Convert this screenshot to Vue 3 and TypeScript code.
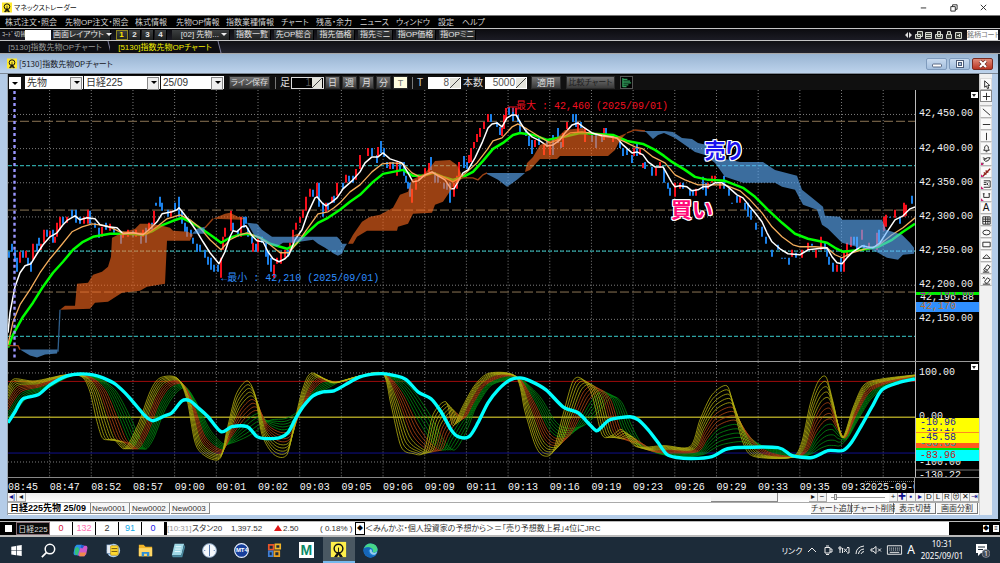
<script setup lang="ts">
type Knot = [number, number, number, number]
type Tone = 'red' | 'pink' | 'ink' | 'sky' | 'blue'

const menus = ['株式注文・照会', '先物OP注文・照会', '株式情報', '先物OP情報', '指数業種情報', 'チャート', '残高・余力', 'ニュース', 'ウィンドウ', '設定', 'ヘルプ']
const shortcuts = ['指数一覧', '先OP総合', '指先価格', '指先ミニ', '指OP価格', '指OPミニ']
const periods = ['日', '週', '月', '分']
const times = ['08:45', '08:47', '08:52', '08:57', '09:00', '09:01', '09:02', '09:03', '09:05', '09:06', '09:09', '09:11', '09:13', '09:16', '09:19', '09:23', '09:26', '09:29', '09:33', '09:35', '09:37']
const sheets = ['New0001', 'New0002', 'New0003']
const chartActions = ['チャート追加', 'チャート削除', '表示切替', '画面分割']
const quotes: { v: string; tone: Tone }[] = [
  { v: '0', tone: 'red' }, { v: '132', tone: 'pink' }, { v: '2', tone: 'ink' }, { v: '91', tone: 'sky' }, { v: '0', tone: 'blue' }
]
const zoomKeys = ['+', '✚', '▪', '▸', 'D', 'L', 'R', '⊕', '✕', '⇥']

const gridX = Array.from({ length: 21 }, (_, i) => 49.6 + i * 41.68)
const prices = [42450, 42400, 42350, 42300, 42250, 42200, 42150]
const priceY = (p: number) => 114.5 + (42450 - p) * 0.684
const priceTop = (p: number) => ({ top: ((priceY(p) - 90) / 271) * 100 + '%' })
const oscTop = (y: number) => ({ top: ((y - 362) / 116) * 100 + '%' })
const fmt = (p: number) => p.toLocaleString('en-US') + '.00'

const bandBrown = [42440, 42310, 42190]
const bandTeal = [42375, 42250, 42125]

const fastMa = '8,333 10,313 15,287 20,273 25,266 31,264 37,254 43,245 50,237 57,233 63,225 68,220 75,216 80,220 87,218 95,219 100,225 108,227 117,228 123,234 133,233 143,235 150,229 157,222 162,214 172,212 177,210 179,208 183,213 190,222 197,232 203,242 210,253 219,264 225,252 230,237 233,231 237,232 242,227 246,226 252,236 257,241 263,242 268,252 273,259 279,262 285,259 289,255 295,240 302,230 308,213 315,198 317,197 322,203 326,206 332,202 337,198 343,189 353,180 360,172 365,163 372,157 378,157 383,153 390,159 402,163 408,173 413,182 418,181 425,175 432,172 438,176 445,180 451,189 454,189 460,178 463,173 468,170 475,158 482,143 488,128 492,124 497,123 502,127 507,118 512,115 516,115 520,122 525,130 532,137 540,141 547,146 553,145 560,140 565,133 572,125 578,123 583,127 592,133 602,136 610,137 617,138 623,145 632,153 637,152 643,155 648,162 655,167 663,167 672,183 675,187 680,186 687,187 692,191 698,190 703,187 708,187 715,183 722,183 728,187 737,195 743,198 750,207 755,213 762,222 767,233 772,242 780,249 788,254 800,255 808,250 817,249 827,248 832,257 837,263 842,264 847,258 853,252 862,246 867,247 873,248 880,243 887,232 895,220 903,216 910,209 915,207'
const midMa = '8,345 13,322 20,305 30,290 40,273 50,259 60,247 72,232 82,227 92,224 107,226 120,232 133,233 147,234 157,227 167,219 180,215 190,220 200,228 210,240 221,250 230,240 240,235 247,233 260,238 270,245 280,253 289,253 298,242 308,228 318,214 328,212 334,208 340,203 350,192 360,185 372,172 382,164 392,163 403,164 412,173 420,177 433,173 443,177 453,182 460,178 467,172 477,163 487,150 493,141 502,138 512,127 518,124 527,129 540,137 550,143 560,139 570,133 582,132 597,134 613,137 625,142 635,147 643,149 653,157 665,163 675,175 685,180 698,185 715,185 725,185 740,191 750,200 762,213 772,227 782,237 793,245 800,247 815,247 827,248 835,255 842,258 852,253 865,249 878,246 892,235 903,228 915,218'
const slowMa = '8,348 13,335 23,317 33,303 43,287 53,273 63,262 73,250 83,242 93,237 110,234 127,234 143,235 153,231 163,225 173,221 182,218 192,223 203,230 213,237 221,243 230,238 240,235 248,234 260,238 270,244 287,249 295,245 307,233 318,223 328,218 340,210 350,202 360,195 373,182 383,174 393,172 403,170 413,176 423,176 433,173 443,177 453,180 463,177 473,172 483,161 493,149 503,143 513,135 520,133 533,135 547,140 563,137 580,133 597,134 613,135 627,141 643,144 655,150 664,156 672,162 685,170 695,177 708,180 725,181 743,188 755,197 768,210 782,223 795,234 808,239 827,243 835,248 843,252 862,250 878,247 892,240 903,232 915,224'

const bullClouds = [
  '60,310 65,306 75,306 77,284 88,283 93,275 102,272 108,267 111,257 112,238 122,233 135,229 140,224 150,224 162,226 170,228 173,231 188,232 193,235 190,241 167,241 165,284 147,287 140,291 122,293 108,302 95,303 90,309 61,310',
  '213,219 225,214 230,213 238,217 246,219 240,220',
  '291,237 297,234 303,236',
  '348,244 353,235 362,222 370,217 380,215 393,208 400,195 408,192 412,180 425,173 432,165 435,161 450,160 457,165 461,173 463,178 453,187 443,202 435,205 432,213 413,214 408,224 398,227 397,231 367,231 357,237 353,244',
  '525,172 527,163 533,157 540,145 557,138 565,130 583,128 588,135 617,137 627,133 620,140 615,150 608,156 560,156 557,159 540,159 530,170'
]
const bearClouds = [
  '20,350 58,350 57,354 45,355 37,358 30,356',
  '192,234 197,229 205,227 204,234',
  '247,223 257,224 262,230 272,237 290,237 337,237 340,240 342,244 347,244 345,247 342,254 338,256 334,254 325,248 318,244 313,240 293,243 283,243 277,247 267,244 255,237 250,228',
  '485,173 525,173 517,180 507,187 498,180',
  '635,131 665,131 673,132 682,138 692,139 698,143 707,145 725,159 740,162 763,162 775,170 797,176 802,190 812,198 823,207 825,216 840,217 842,220 882,220 886,230 902,235 910,243 914,248 914,254 903,255 898,260 887,258 878,253 872,250 860,248 842,243 828,229 822,225 817,210 803,205 795,190 782,187 775,183 743,183 725,177 715,163 705,155 695,152 685,145 675,138 664,133 658,135 653,139 646,132'
]

const upBars = 'M20 252V263M26 251V258M33 244V260M41 244V250M44 230V243M50 231V237M55 237V243M57 223V237M60 217V230M67 217V223M84 217V224M88 210V224M102 227V237M110 224V231M123 233V238M128 230V237M136 230V237M143 230V237M149 223V232M154 211V224M171 211V217M221 258V278M223 237V250M225 228V237M231 211V231M241 217V237M253 243V252M258 237V252M274 265V278M277 258V264M281 252V264M285 250V258M290 243V252M293 230V244M296 223V230M300 217V223M303 210V218M306 197V211M310 189V197M317 183V197M326 203V212M332 197V203M337 183V196M346 175V183M356 169V180M360 155V169M368 148V156M378 147V156M390 162V169M397 162V176M412 189V203M416 180V190M419 175V181M425 168V177M429 163V172M454 183V197M457 176V189M459 162V177M469 155V163M471 148V162M474 142V148M477 134V142M480 128V137M484 122V129M488 114V122M502 128V136M504 115V129M506 108V120M516 108V115M535 140V147M544 145V155M550 145V155M563 133V147M567 122V129M578 122V133M585 128V142M604 128V140M613 135V142M634 148V156M640 149V155M643 163V168M656 168V176M660 162V168M675 183V197M680 183V189M696 189V196M708 183V189M712 176V183M715 176V182M720 182V189M740 197V203M792 250V257M802 250V258M808 243V250M816 250V258M821 237V250M837 265V272M844 253V272M847 243V257M851 237V247M862 230V240M869 243V250M877 233V250M884 217V231M886 215V227M895 210V218M904 203V217M906 205V216'
const downBars = 'M9 252V258M12 244V252M15 250V262M17 258V272M23 251V258M28 258V265M31 262V272M37 244V252M39 238V246M47 230V237M53 230V243M63 217V224M72 210V217M76 210V223M80 217V224M90 211V224M95 223V228M99 228V238M106 223V230M114 228V233M121 232V244M133 231V237M141 233V244M146 228V243M152 223V230M156 203V206M160 197V207M162 203V211M168 210V217M175 203V211M179 197V217M182 211V224M185 223V232M187 227V237M191 230V237M193 238V244M197 244V252M200 245V252M205 250V258M208 257V265M211 258V270M214 265V272M218 265V272M233 223V231M238 230V237M244 217V228M246 217V224M248 228V237M252 237V244M256 244V252M262 237V243M266 243V257M268 252V265M271 258V272M288 250V257M313 190V197M319 183V207M323 203V217M328 203V210M334 196V203M343 183V189M349 176V182M353 176V183M372 148V156M377 155V163M381 141V153M384 148V157M387 162V168M393 162V169M400 162V170M404 162V176M406 176V183M408 182V189M410 183V197M431 157V170M435 172V183M438 176V183M444 183V189M447 183V190M450 183V203M464 156V168M467 162V169M491 114V122M497 122V127M500 127V135M509 107V115M513 108V121M518 115V122M520 121V134M526 128V136M529 136V146M532 140V154M539 138V145M547 140V147M553 135V155M558 128V143M561 142V148M573 114V122M576 114V127M581 122V128M592 133V142M596 135V148M602 135V142M606 128V135M620 142V148M623 148V156M627 149V155M632 155V163M637 142V156M645 162V169M652 167V176M664 168V183M668 183V189M670 188V196M683 183V189M690 189V196M693 190V196M703 177V190M706 183V196M724 176V189M729 189V196M732 203V204M737 196V203M745 203V210M748 203V217M751 210V220M756 223V230M762 227V237M766 237V244M772 250V257M778 245V250M782 258V259M785 258V259M789 258V265M796 253V258M812 244V246M825 243V250M827 248V257M829 257V265M833 263V272M841 258V272M854 237V245M857 237V250M864 245V250M879 230V243M890 217V218M900 217V224M912 196V204'

const family: Knot[] = [
  [8, 388, 8, 424], [14, 379, 25, 400], [35, 381, 45, 390], [65, 375, 72, 376], [82, 377, 97, 378], [90, 392, 115, 390],
  [97, 422, 130, 417], [103, 439, 140, 440], [114, 440, 143, 448], [125, 449, 147, 449], [138, 425, 154, 438], [150, 392, 165, 410],
  [160, 378, 176, 393], [177, 378, 186, 388], [187, 400, 196, 402], [197, 448, 210, 430], [219, 460, 223, 444], [227, 430, 233, 443],
  [236, 395, 247, 437], [247, 381, 258, 430], [255, 395, 264, 424], [262, 435, 272, 420], [274, 455, 285, 419], [287, 455, 295, 414],
  [295, 420, 305, 404], [303, 388, 318, 393], [312, 373, 330, 387], [333, 383, 342, 381], [360, 376, 362, 376], [383, 374, 386, 374],
  [391, 405, 408, 385], [401, 447, 428, 412], [413, 454, 442, 438], [424, 452, 452, 450], [433, 415, 458, 447], [446, 402, 468, 428],
  [453, 426, 474, 412], [462, 408, 480, 401], [475, 385, 492, 385], [490, 373, 512, 379], [516, 377, 522, 380], [525, 412, 540, 397],
  [535, 445, 554, 420], [543, 456, 564, 428], [553, 452, 578, 428], [563, 415, 588, 423], [573, 381, 600, 410], [582, 379, 612, 397],
  [592, 395, 622, 403], [602, 435, 632, 427], [612, 436, 643, 446], [622, 430, 655, 453], [636, 447, 668, 456], [664, 446, 680, 458],
  [690, 447, 703, 455], [700, 420, 712, 450], [712, 395, 722, 445], [727, 386, 740, 442], [734, 410, 752, 445], [743, 443, 768, 448],
  [754, 457, 784, 452], [790, 458, 802, 457], [801, 445, 812, 454], [810, 405, 820, 449], [818, 382, 828, 446], [826, 377, 835, 446],
  [833, 402, 840, 446], [842, 438, 848, 438], [853, 408, 858, 420], [864, 385, 872, 398], [882, 379, 888, 387], [915, 375, 915, 377]
]
const signal: [number, number][] = [
  [8, 423], [15, 412], [23, 399], [38, 395], [50, 385], [67, 376], [80, 374], [93, 375], [103, 378], [115, 384], [125, 393], [133, 402],
  [145, 416], [153, 421], [165, 416], [172, 413], [182, 401], [190, 401], [197, 407], [208, 417], [221, 432], [232, 427], [247, 427],
  [257, 437], [265, 439], [280, 438], [288, 433], [295, 420], [303, 407], [313, 396], [323, 392], [334, 391], [345, 385], [360, 377],
  [375, 374], [386, 374], [405, 379], [418, 392], [431, 399], [441, 412], [451, 430], [458, 437], [469, 437], [478, 423], [488, 403],
  [498, 390], [510, 380], [520, 378], [530, 381], [546, 390], [563, 407], [578, 413], [588, 423], [596, 431], [601, 428], [610, 420],
  [630, 417], [638, 420], [648, 430], [658, 443], [667, 455], [677, 458], [692, 459], [712, 457], [725, 450], [738, 448], [778, 448],
  [792, 456], [812, 458], [828, 451], [843, 451], [852, 442], [862, 425], [872, 407], [882, 390], [898, 383], [915, 379]
]

function smooth(p: [number, number][]): string {
  let d = `M${p[0][0]} ${p[0][1]}`
  for (let i = 0; i < p.length - 1; i++) {
    const a = p[Math.max(0, i - 1)]
    const b = p[i]
    const c = p[i + 1]
    const e = p[Math.min(p.length - 1, i + 2)]
    const n = (v: number) => v.toFixed(1)
    d += `C${n(b[0] + (c[0] - a[0]) / 7)} ${n(b[1] + (c[1] - a[1]) / 7)} ${n(c[0] - (e[0] - b[0]) / 7)} ${n(c[1] - (e[1] - b[1]) / 7)} ${n(c[0])} ${n(c[1])}`
  }
  return d
}

const ribbons = Array.from({ length: 14 }, (_, i) => {
  const k = i / 13
  const pts = family.map(([xf, yf, xs, ys]): [number, number] => [xf + (xs - xf) * k, yf + (ys - yf) * k])
  return { d: smooth(pts), tone: i < 5 ? 'yellow' : i < 9 ? 'orange' : 'green' }
}).reverse()
const signalPath = smooth(signal)

const tools: { name: string; d: string }[] = [
  { name: '斜線', d: 'M2 2L10 9' },
  { name: '水平線', d: 'M2 6H10' },
  { name: '垂直線', d: 'M6 2V10' },
  { name: 'アラート', d: 'M3 8H9L8 6V4Q6 1 4 4V6ZM5 9.5H7' },
  { name: '波形', d: 'M2 3L5 4L7 3L10 3L8 6L5 7L3 5L6 4M1 9L3 9' },
  { name: 'トレンド', d: 'M2 10L10 2M3 6L6 8M5 4L8 6' },
  { name: '価格帯', d: 'M3 2H10V9H3M3 4H6M3 6H6M8 4Q5 5 8 7' },
  { name: '期間', d: 'M3 3V7H9V3M2 3H4M8 3H10' },
  { name: '文字', d: '' },
  { name: '表', d: 'M2 2H10V10H2ZM2 4.5H10M2 7H10M5 2V10M7.5 2V10' },
  { name: '楕円', d: 'M2 6A4 2.6 0 1 0 10 6A4 2.6 0 1 0 2 6' },
  { name: '四角', d: 'M2 3.5H10V8.5H2Z' },
  { name: '三角', d: 'M6 4L10 8H2Z' },
  { name: '消去', d: 'M3 7L7 2L10 4L6 9H4ZM2 10H9M4 6L7 8' },
  { name: '全消去', d: 'M4 7L7 3L10 5L7 9H5ZM2 10H10M2 2L4 4M4 2L2 4' }
]
</script>

<template>
  <div class="app">
    <header class="titlebar">
      <svg class="logo" viewBox="0 0 12 12"><rect width="12" height="12" fill="#ffe92e" /><circle cx="6" cy="5" r="3.4" fill="none" stroke="#111" stroke-width="1.2" /><path d="M6 4V7L3 11H5L6 9L7 11H9L6 7" fill="#111" stroke="#111" stroke-width=".8" /></svg>
      <h1>マネックストレーダー</h1>
      <div class="winctl">
        <button aria-label="最小化"><svg viewBox="0 0 10 10"><path d="M2 5.5H8" /></svg></button>
        <button aria-label="元に戻す"><svg viewBox="0 0 10 10"><path d="M2 4H7V9H2ZM4 4V2H9V7H7" /></svg></button>
        <button aria-label="閉じる"><svg viewBox="0 0 10 10"><path d="M2 2L8 8M8 2L2 8" /></svg></button>
      </div>
    </header>

    <nav class="menubar">
      <a v-for="m in menus" :key="m" href="#">{{ m }}</a>
    </nav>

    <div class="mainbar">
      <label class="code" for="code">ｺｰﾄﾞ切替</label>
      <input id="code" type="text" class="codebox">
      <button class="dark lay">画面レイアウト<i class="tri"></i></button>
      <div class="nums">
        <button v-for="n in 4" :key="n" class="dark" :class="{ on: n === 1 }">{{ n }}</button>
      </div>
      <button class="dark lay">[02] 先物...<i class="tri"></i></button>
      <div class="shorts">
        <button v-for="s in shortcuts" :key="s" class="dark">{{ s }}</button>
      </div>
      <svg class="minis" viewBox="0 0 58 10">
        <path d="M3 2L0 5L3 8ZM4 2L7 5L4 8Z" fill="#ddd" />
        <g fill="#3c403a" stroke="#d4d8d0"><path d="M12.500 1.500H17.500V6.500H12.500ZM10.500 4.500H15.500V8.500H10.500ZM20.500 2.500H26.500V8.500H20.500ZM20 4.500H27M21 6.500H26M30.500 4.500H37.500V8.500H30.500ZM32.500 1.500H35.500V6.500H32.500ZM42.500 4V1.500H45.500V4M41.500 4.500H46.500V8.500H41.500ZM50.500 2.500H56.500V8.500H50.500ZM52 5.500H55M54.500 4V7" /></g>
      </svg>
      <input type="text" class="find" placeholder="銘柄コード" aria-label="銘柄コード">
    </div>

    <div class="doctabs">
      <button>[5130]指数先物OPチャート</button>
      <button class="on">[5130]指数先物OPチャート</button>
    </div>

    <main class="mdi">
      <header class="childbar">
        <svg class="logo" viewBox="0 0 12 12"><rect width="12" height="12" fill="#ffe92e" /><circle cx="6" cy="5" r="3.4" fill="none" stroke="#111" stroke-width="1.2" /><path d="M6 4V7L3 11H5L6 9L7 11H9L6 7" fill="#111" stroke="#111" stroke-width=".8" /></svg>
        <h2>[5130]指数先物OPチャート</h2>
        <div class="childctl">
          <button aria-label="最小化"><svg viewBox="0 0 14 10"><rect x="2.500" y="5" width="9" height="3" rx="1" fill="#fff" stroke="#5b6b86" /></svg></button>
          <button aria-label="最大化"><svg viewBox="0 0 14 10"><rect x="3.500" y="1.500" width="7" height="7" fill="#fff" stroke="#4c5c78" /><rect x="5.500" y="3.500" width="3" height="3" fill="#a9c4e4" stroke="#4c5c78" /></svg></button>
          <button aria-label="閉じる" class="close"><svg viewBox="0 0 14 10"><path d="M4 2L10 8M10 2L4 8" stroke="#6d2a24" stroke-width="3.600" /><path d="M4 2L10 8M10 2L4 8" stroke="#fff" stroke-width="2.200" /></svg></button>
        </div>
      </header>

      <div class="body">
        <section class="work">
          <div class="chartbar">
            <button class="drop" aria-label="一覧"></button>
            <div class="sel"><select aria-label="種別"><option>先物</option></select></div>
            <div class="sel"><select aria-label="銘柄"><option>日経225</option></select></div>
            <div class="sel"><select aria-label="限月"><option>25/09</option></select></div>
            <button class="grey save">ライン保存</button>
            <label for="foot" class="foot">足</label>
            <div class="spin off"><input id="foot" type="text" value="1"><i></i></div>
            <div class="periods">
              <button v-for="p in periods" :key="p" class="grey">{{ p }}</button>
              <button class="grey tick">T</button>
            </div>
            <label for="ticks" class="foot mid">T</label>
            <div class="spin"><input id="ticks" type="text" value="8"><i></i></div>
            <label for="bars" class="bars">本数</label>
            <div class="spin"><input id="bars" type="text" value="5000"><i></i></div>
            <button class="grey apply">適用</button>
            <button class="grey dim" disabled>比較チャート</button>
            <button class="vol" aria-label="価格帯別出来高"><svg viewBox="0 0 12 12"><path d="M2 1V11M2 2.500H7M2 4.500H10M2 6.500H11M2 8.500H8M2 10.500H6" stroke="#2f9c5a" stroke-width="1.300" fill="none" /></svg></button>
          </div>

          <div class="pane price">
            <div class="plot">
              <svg viewBox="8 90 907 271" preserveAspectRatio="none">
                <g class="grid">
                  <line v-for="x in gridX" :key="x" :x1="x" :x2="x" y1="90" y2="361" />
                  <line v-for="p in prices" :key="p" x1="8" x2="915" :y1="priceY(p)" :y2="priceY(p)" />
                </g>
                <line v-for="p in bandBrown" :key="p" class="brown" x1="8" x2="915" :y1="priceY(p)" :y2="priceY(p)" />
                <line v-for="p in bandTeal" :key="p" class="teal" x1="8" x2="915" :y1="priceY(p)" :y2="priceY(p)" />
                <path :d="downBars" class="down" />
                <path :d="upBars" class="up" />
                <polyline :points="slowMa" class="slow" />
                <polyline :points="midMa" class="midma" />
                <polyline :points="fastMa" class="fast" />
                <polygon v-for="c in bullClouds" :key="c" :points="c" class="bull" />
                <polygon v-for="c in bearClouds" :key="c" :points="c" class="bear" />
                <path d="M8 346H18L20 350M205 228L213 219M461 178L473 178L478 180L483 175L487 173M627 133L635 130L645 131" class="bullline" />
                <path d="M58 352L60 310" class="bearline" />
                <path d="M505 111L508 107H517M513 107V112" stroke="#f01020" fill="none" />
                <line x1="14.500" x2="14.500" y1="91" y2="361" class="session" />
              </svg>
              <span class="note max">最大 : 42,460 (2025/09/01)</span>
              <span class="note min">←最小 : 42,210 (2025/09/01)</span>
              <strong class="mark sell">売り</strong>
              <strong class="mark buy">買い</strong>
            </div>
            <div class="axis">
              <i class="fold"></i>
              <span v-for="p in prices" :key="p" :style="priceTop(p)">{{ fmt(p) }}</span>
              <div class="tags pricetags">
                <b class="t-green">42,195.00</b>
                <b class="t-black">42,196.88</b>
                <b class="t-blue">42,170</b>
              </div>
            </div>
          </div>

          <div class="pane osc">
            <div class="plot">
              <svg viewBox="8 362 907 116" preserveAspectRatio="none">
                <g class="grid">
                  <line v-for="x in gridX" :key="x" :x1="x" :x2="x" y1="362" y2="477" />
                  <line x1="8" x2="915" y1="373" y2="373" />
                  <line x1="8" x2="915" y1="462.500" y2="462.500" />
                </g>
                <path d="M8 381.500H915" stroke="#a00c0c" />
                <path d="M8 417.500H915" stroke="#a39a22" stroke-width="1.500" />
                <path d="M8 453.500H915" stroke="#10108c" />
                <path v-for="r in ribbons" :key="r.d" :d="r.d" :class="['rib', r.tone]" />
                <path :d="signalPath" class="signal" />
              </svg>
            </div>
            <div class="axis">
              <i class="fold"></i>
              <span :style="oscTop(373)">100.00</span>
              <span :style="oscTop(418)">0.00</span>
              <span :style="oscTop(464)">-100.00</span>
              <span class="low" :style="oscTop(476)">-130.22</span>
              <div class="tags osctags">
                <b class="o-y1">-10.96</b>
                <b class="o-y0">-18.17</b>
                <b class="o-y2">-45.58</b>
                <b class="o-o">-56.65</b>
                <b class="o-c">-83.96</b>
              </div>
            </div>
          </div>

          <div class="timeaxis">
            <div class="times">
              <span v-for="t in times" :key="t">{{ t }}</span>
              <em>2025-09-01</em>
            </div>
          </div>

          <div class="scrollrow">
            <button class="k navy">◂|</button>
            <button class="k">◂</button>
            <div class="track"><i></i></div>
            <button class="k">▸</button>
            <button class="k">−</button>
            <input type="range" aria-label="表示倍率" min="0" max="100" value="6">
            <button v-for="(z, i) in zoomKeys" :key="z" class="k" :class="{ navy: (i > 0 && i < 4) || i === 9 }">{{ z }}</button>
          </div>

          <div class="sheetrow">
            <button class="on">日経225先物 25/09</button>
            <button v-for="s in sheets" :key="s" class="sheet">{{ s }}</button>
            <div class="acts"><button v-for="a in chartActions" :key="a">{{ a }}</button></div>
          </div>
        </section>

        <aside class="tools">
          <button aria-label="選択"><svg viewBox="0 0 12 12"><path d="M4 2V9L6 7.500L7 10.500L8.500 10L7.500 7H9.500Z" /></svg></button>
          <button aria-label="十字" class="on"><svg viewBox="0 0 12 12"><path d="M6 2V10M2 6H10" /></svg></button>
          <div class="gap"></div>
          <button v-for="(t, i) in tools" :key="t.name" :aria-label="t.name">
            <span v-if="!t.d">A</span>
            <svg v-else viewBox="0 0 12 12"><path :d="t.d" :class="{ red: i === 5 }" /><path v-if="i > 3 && i < 8" d="M0 8V11H3Z" class="corner" /></svg>
          </button>
        </aside>
      </div>
    </main>

    <footer class="ticker">
      <i class="sq"></i>
      <button class="idx">日経225</button>
      <span v-for="(q, i) in quotes" :key="i" class="q" :class="q.tone">{{ q.v }}</span>
      <div class="strip">
        <span class="at">[10:31]</span><span class="nm">スタン20</span><span class="px">1,397.52</span><span class="chg"><i></i>2.50</span><span class="pc">( 0.18% )</span>
        <button class="box" aria-label="ニュース切替">◆</button>
        <a href="#" class="news">＜みんかぶ・個人投資家の予想から＞＝「売り予想数上昇」4位にJRC</a>
      </div>
      <div class="ends"><button aria-label="設定">◆</button><button aria-label="表示">≡</button></div>
    </footer>

    <footer class="taskbar">
      <div class="apps">
        <button aria-label="スタート"><svg viewBox="0 0 20 20"><path d="M4.500 6L9.500 5.200V9.700H4.500ZM10.200 5.100L15.500 4.300V9.700H10.200ZM4.500 10.300H9.500V14.900L4.500 14.100ZM10.200 10.300H15.500V15.800L10.200 15Z" fill="#fff" /></svg></button>
        <button aria-label="検索"><svg viewBox="0 0 20 20"><circle cx="11.500" cy="8.500" r="5" fill="none" stroke="#fff" stroke-width="1.600" /><path d="M8 12L3 17" stroke="#fff" stroke-width="1.800" /></svg></button>
        <button aria-label="Copilot"><svg viewBox="0 0 20 20"><path d="M6 4H11Q13 4 12 7L10 13Q9 16 6 15H4Q2 14 3 11L4 6Z" fill="#2a8fe8" /><path d="M4 8L7 6L9 9L7 15L4 14Z" fill="#35c07a" /><path d="M14 16H9Q7 16 8 13L10 7Q11 4 14 5H16Q18 6 17 9L16 14Z" fill="#d05ac8" /><path d="M9 12H16L14 16H9Z" fill="#f08a4a" /><path d="M11 4L14 5L12 8L10 7Z" fill="#1f5fd0" /></svg></button>
        <button aria-label="メール"><svg viewBox="0 0 20 20"><circle cx="11" cy="10" r="7" fill="#a9cdf0" /><rect x="4" y="4" width="6" height="9" fill="#e8eef5" stroke="#5577a0" stroke-width=".6" /><rect x="8" y="5" width="8" height="10" rx="1" fill="#ffd92e" stroke="#b98a10" stroke-width=".7" /><path d="M9 8H15M9 11H15" stroke="#6b5210" /></svg></button>
        <button aria-label="エクスプローラー"><svg viewBox="0 0 20 20"><path d="M3 4H8L10 6H17V16H3Z" fill="#f0b429" /><path d="M3 7.500H17V16H3Z" fill="#ffd766" /><path d="M6 16V11.500H14V16H11.500V13.500H8.500V16Z" fill="#2f8fd8" /></svg></button>
        <button aria-label="メモ帳"><svg viewBox="0 0 20 20"><path d="M7 3H17L14 15H4Z" fill="#9fd8e6" /><path d="M4 15H14L17 4L18 6L15 17H5Z" fill="#4a8aa0" /><path d="M8 6H14M7.500 8.500H13.500M7 11H13" stroke="#e8fbff" /></svg></button>
        <button aria-label="時計"><svg viewBox="0 0 20 20"><circle cx="10" cy="10" r="7.200" fill="#f4f8fc" stroke="#9fb8d4" /><path d="M10 4V16" stroke="#4a6fa8" /><path d="M4.500 10H5.500M14.500 10H15.500" stroke="#4a6fa8" /></svg></button>
        <button aria-label="MT4" class="mt"><svg viewBox="0 0 20 20"><circle cx="10" cy="10" r="7.200" fill="#173f9c" stroke="#e8f0ff" stroke-width="1.200" /></svg><span>MT4</span></button>
        <button aria-label="Office"><svg viewBox="0 0 20 20"><g fill="none" stroke-width="1.800"><path d="M4 4H9V9H4Z" stroke="#e8542a" /><path d="M11 3.500H16V8H11Z" stroke="#f0b429" /><path d="M4 11H8V16H4Z" stroke="#3f7fd8" /><path d="M10 11H15V16H10Z" stroke="#e9a020" /></g></svg></button>
        <button aria-label="M" class="mm"><span>M</span></button>
        <button aria-label="マネックストレーダー" class="active"><svg viewBox="0 0 20 20"><rect x="2" y="2" width="16" height="16" fill="#fff04a" /><circle cx="10" cy="9" r="4.600" fill="none" stroke="#111" stroke-width="1.500" /><path d="M10 8V12L6 17.500H8.500L10 14.500L11.500 17.500H14L10 12" fill="#111" stroke="#111" /></svg></button>
        <button aria-label="Edge"><svg viewBox="0 0 20 20"><circle cx="10" cy="10" r="7.500" fill="#1b7fd6" /><path d="M3 8Q5 2.500 10 2.500Q17 3 17.500 9Q17 13 12 12Q14 8 10 7Q6 6 3 8Z" fill="#46d68a" /><path d="M3 8Q8 5 11 8Q8 8 8 11Q9 16 15 15.500Q10 19 6 16Q2 13 3 8Z" fill="#1666b8" /><path d="M10 8.500Q12 9 11.500 11.500L14 12.500Q16 12 17 11Q16 15 12.500 14.500Q9 13 9 10Z" fill="#cfeefa" opacity=".7" /></svg></button>
      </div>
      <div class="tray">
        <span class="link">リンク</span>
        <svg viewBox="0 0 12 12"><path d="M2 8L6 4L10 8" /></svg>
        <svg viewBox="0 0 12 12"><path d="M3 3.500H8V9H3ZM8 5H10V8H8M4 2H7M4 10.500H7" /></svg>
        <svg viewBox="0 0 12 12"><path d="M1 3H3V5H1ZM2 5V9M4.500 4V9M6 4.500L9 8M9 4.500L6 8M9 3.500H11V9H9" /></svg>
        <svg viewBox="0 0 12 12"><path d="M2 10Q2 3 10 2M4.500 10Q5 5.500 10 5M7 10Q7.500 8 10 7.500" /></svg>
        <svg viewBox="0 0 12 12"><path d="M1 5H3L6 2.500V9.500L3 7H1ZM8 4.500L11 7.500M11 4.500L8 7.500" /></svg>
        <svg viewBox="0 0 18 12" class="kb"><path d="M1.500 1.500H16.500V10.500H1.500ZM4 8.500H14" /><path d="M3.500 4H15M3.500 6H15" stroke-dasharray="1 1" /></svg>
        <span class="ime">A</span>
        <time>10:31<br>2025/09/01</time>
        <button aria-label="通知" class="bell"><svg viewBox="0 0 16 16"><path d="M2 2H13V11H7L4 14V11H2Z" fill="#fff" stroke="none" /><path d="M4 5H11M4 7.500H9" stroke="#1c2b39" /><circle cx="12" cy="11.500" r="4" fill="#444c55" stroke="#aab" stroke-width=".6" /></svg><span>1</span></button>
      </div>
    </footer>
  </div>
</template>

<style>
html, body { margin: 0; background: #000; }
#app { min-width: 0; }
</style>

<style scoped>
* { box-sizing: border-box; }
.app { height: 100vh; min-height: 480px; display: flex; flex-direction: column; overflow: hidden; background: #000; font-family: "Liberation Sans", "Noto Sans CJK JP", sans-serif; font-size: 8px; line-height: 11px; font-feature-settings: "palt"; color: #ddd; }
button, input, select { font: inherit; font-feature-settings: inherit; color: inherit; margin: 0; padding: 0; border: 0; border-radius: 0; background: none; min-width: 0; outline: none; white-space: nowrap; }
a { color: inherit; text-decoration: none; white-space: nowrap; }
h1, h2 { margin: 0; font-size: 8px; font-weight: 400; font-family: "Noto Sans CJK JP", sans-serif; }
svg { display: block; }

.titlebar { flex: none; height: 16px; background: #fff; color: #111; display: flex; align-items: center; padding: 0 2px; gap: 2px; border-bottom: 1px solid #777; }
.titlebar h1 { flex: 1; font-size: 7px; }
.logo { width: 10px; height: 11px; flex: none; }
.winctl { display: flex; }
.winctl button { width: 30px; display: grid; place-items: center; }
.winctl svg { width: 9px; height: 9px; fill: none; stroke: #222; }

.menubar { flex: none; height: 13px; display: grid; grid-template-columns: 60px 70px 41px 50px 55px 35px 44px 36px 42px 24px auto; padding-left: 5px; align-items: center; background: #000; color: #d4d4d4; border-bottom: 1px solid #c4c4c4; }

.mainbar { flex: none; height: 12px; display: flex; align-items: center; background: linear-gradient(#0c0c10, #1b1b24); border-bottom: 1px solid #c4c4c4; color: #ddd; }
.code { width: 25px; padding-left: 2px; font-size: 6px; white-space: nowrap; }
.codebox { width: 26px; height: 10px; background: #fff; color: #111; }
.dark { height: 10px; line-height: 10px; background: linear-gradient(#3c3f40, #1e2020); color: #e6e6e6; border-right: 1px solid #000; }
.lay { width: 58px; margin-left: 2px; text-align: right; padding-right: 2px; }
.tri { display: inline-block; border: 3px solid transparent; border-top-color: #eee; border-bottom: 0; margin-left: 2px; vertical-align: middle; }
.nums { display: flex; gap: 1px; margin: 0 3px 0 5px; }
.nums .dark { width: 12px; font-weight: 700; }
.nums .on { color: #ffe800; outline: 1px solid #8d8420; outline-offset: -1px; }
.shorts { display: grid; grid-template-columns: 40px 43px 41px 38px 43px 40px; margin-left: 4px; flex: 1; }
.shorts .dark { margin-right: 3px; }
.minis { width: 58px; height: 10px; margin-right: 4px; }
.find { width: 31px; height: 10px; background: #fff; color: #555; font-size: 7px; margin-right: 2px; }
.find::placeholder { color: #777; opacity: 1; }

.doctabs { flex: none; height: 13px; display: flex; background: linear-gradient(#101014, #22222c); border-bottom: 1px solid #a8a8a8; color: #9a9a9a; }
.doctabs button { width: 110px; text-align: center; background: #0c0c10; position: relative; }
.doctabs button::after { content: ""; position: absolute; right: 0; top: 0; bottom: 0; border-right: 1px solid #8080a0; transform: skewX(14deg); }
.doctabs .on { color: #f4ee00; }

.mdi { flex: 1; min-height: 0; display: flex; flex-direction: column; background: #b4cce8; border-right: 2px solid #10202c; border-bottom: 2px solid #000; padding: 0 6px 4px 7px; }
.childbar { flex: none; height: 20px; margin: 0 -6px 0 -7px; padding: 0 5px 0 7px; background: linear-gradient(#98b4d2, #bdd3ec); display: flex; align-items: center; gap: 2px; color: #16161c; border-bottom: 1px solid #7c8794; }
.childbar h2 { flex: 1; }
.childctl { display: flex; gap: 2px; }
.childctl button { width: 21px; height: 12px; border: 1px solid #7f9bbd; border-radius: 2px; background: linear-gradient(#c9dbf0, #a3bedd); display: grid; place-items: center; }
.childctl svg { width: 14px; height: 10px; }
.childctl .close { background: linear-gradient(#e08a78, #b93422); border-color: #7a2a20; }

.body { flex: 1; min-height: 0; display: flex; border: 1px solid #9aa4ae; border-width: 0 0 0 1px; }
.work { flex: 1; min-width: 0; display: flex; flex-direction: column; background: #000; }
.chartbar { flex: none; height: 16px; display: flex; align-items: center; background: #101010; border-top: 1px solid #000; color: #ddd; font-size: 10px; line-height: 12px; }
.drop { width: 12px; height: 12px; background: #fff; margin: 0 4px 0 1px; position: relative; }
.drop::after, .sel::after { content: ""; position: absolute; right: 3px; top: 5px; border: 3px solid transparent; border-top-color: #000; border-bottom: 0; pointer-events: none; }
.sel { position: relative; height: 13px; width: 58px; background: #fff; color: #333; margin-right: 1px; }
.sel::before { content: ""; position: absolute; right: 1px; top: 1px; width: 10px; height: 11px; border: 1px solid #888; background: #eee; pointer-events: none; }
.sel:nth-child(3) { width: 76px; }
.sel:nth-child(4) { width: 63px; }
.sel select { appearance: none; width: 100%; height: 13px; padding-left: 2px; }
.grey { height: 13px; line-height: 12px; background: linear-gradient(#747474, #3a3a3a); border: 1px solid #2a2a2a; color: #ddd; text-align: center; }
.save { width: 41px; margin: 0 5px 0 4px; font-size: 8px; }
.foot { width: 16px; padding-left: 4px; border-left: 1px solid #777; line-height: 12px; }
.foot.mid { margin-left: 4px; width: 16px; }
.spin { width: 33px; height: 12px; background: #fff; color: #555; display: flex; align-items: center; }
.spin input { flex: 1; width: 0; text-align: right; height: 12px; }
.spin i { width: 10px; height: 10px; background: linear-gradient(135deg, #e4e4dc 45%, #444 46%, #444 52%, #e4e4dc 54%); margin: 0 1px; }
.spin.off { background: #000; border: 1px solid #ddd; color: #555; }
.bars { margin: 0 2px; width: 20px; }
.bars + .spin { width: 42px; }
.periods { display: flex; gap: 2px; margin: 0 0 0 1px; }
.periods .grey { width: 15px; font-size: 9px; }
.periods .tick { background: #fffde0; color: #777; }
.apply { width: 30px; margin: 0 5px 0 4px; font-size: 9px; }
.dim { width: 49px; color: #1d1d1d; font-size: 8px; }
.vol { width: 13px; height: 13px; background: #000; border: 1px solid #555; margin-left: 5px; }
.vol svg { width: 11px; height: 11px; }

.pane { min-height: 0; display: flex; }
.price { flex: 272 1 0; border-bottom: 1px solid #999; }
.osc { flex: 116 1 0; border-bottom: 1px solid #888; }
.plot { flex: 1; min-width: 0; position: relative; overflow: hidden; }
.plot svg { width: 100%; height: 100%; position: absolute; inset: 0; }
.axis { flex: none; width: 64px; position: relative; overflow: hidden; border-left: 1px solid #bbb; font-family: "Liberation Mono", monospace; font-size: 10px; line-height: 10px; color: #f2f2f2; }
.axis > span { position: absolute; left: 3px; transform: translateY(-50%); }
.axis .low { left: 0; right: 0; padding-left: 3px; border-top: 1px solid #777; background: #000; }
.fold { position: absolute; right: 1px; top: 2px; width: 7px; height: 6px; background: #fff; }
.fold::after { content: ""; position: absolute; left: 1px; top: 2px; border: 2px solid transparent; border-top: 3px solid #222; border-bottom: 0; }
.tags { position: absolute; left: 0; right: 0; display: flex; flex-direction: column; }
.tags b { flex: none; font-weight: 400; padding-left: 4px; overflow: hidden; display: block; }
.pricetags { top: 74.500%; }
.t-green { height: 3px; background: #00f000; color: #a020a0; line-height: 4px; }
.t-black { height: 7px; background: #000; line-height: 5px; }
.t-blue { height: 10px; background: #2f8fff; color: #b8702c; }
.osctags { top: 49.100%; }
.o-y1 { height: 10px; background: #ff0; color: #1c1ca0; }
.o-y0 { height: 5px; background: #ff0; color: #1c1ca0; line-height: 1px; border-bottom: 1px solid #ff8a20; }
.o-y2 { height: 10px; background: #ff0; color: #1c1ca0; }
.o-o { height: 7px; background: #ff5a1e; color: #1f9c9c; line-height: 2px; border-bottom: 2px solid #00e000; }
.o-c { height: 11px; background: #0ff; color: #c01818; line-height: 11px; }

.grid line { stroke: #7d7d7d; stroke-dasharray: 1 2; }
.brown { stroke: #8c7555; stroke-dasharray: 9 3; }
.teal { stroke: #2ea3a3; stroke-dasharray: 4 2; stroke-width: 1.300; }
.up { stroke: #f5101c; stroke-width: 2; fill: none; }
.down { stroke: #1b80e8; stroke-width: 2; fill: none; }
.slow { stroke: #00ff00; stroke-width: 2.500; fill: none; stroke-linejoin: round; }
.midma { stroke: #f5ae5c; stroke-width: 1.300; fill: none; stroke-linejoin: round; }
.fast { stroke: #fff; stroke-width: 1.500; fill: none; stroke-linejoin: round; }
.bull { fill: #ff6a1e; fill-opacity: .6; }
.bear { fill: #5fb0ff; fill-opacity: .62; }
.bullline { stroke: #9a4012; stroke-width: 1.400; fill: none; }
.bearline { stroke: #2f5f8c; stroke-width: 1.300; }
.session { stroke: #9a96ff; stroke-width: 2.400; stroke-dasharray: 3 3; }
.rib { fill: none; stroke-width: .8; }
.rib.yellow { stroke: #b4ae10; }
.rib.orange { stroke: #b44814; }
.rib.green { stroke: #008c10; }
.signal { stroke: #00ffff; stroke-width: 3.400; fill: none; stroke-linejoin: round; }

.note { position: absolute; white-space: nowrap; font-family: "Liberation Mono", "Noto Sans CJK JP", monospace; font-size: 10px; line-height: 12px; }
.note.max { left: 56%; top: 4%; color: #f01020; }
.note.min { left: 23.500%; top: 67.500%; color: #2f8fff; }
.mark { position: absolute; font-family: "Noto Sans CJK JP", sans-serif; font-size: 21px; line-height: 24px; white-space: nowrap; text-shadow: 1px 0 #fff, -1px 0 #fff, 0 1px #fff, 0 -1px #fff, 1px 1px #fff, -1px -1px #fff, 1px -1px #fff, -1px 1px #fff; }
.sell { left: 76.800%; top: 17.500%; color: #1a12f0; }
.buy { left: 73.100%; top: 39.300%; color: #ff0a78; }

.timeaxis { flex: none; height: 15px; padding-right: 64px; background: #000; }
.times { display: flex; position: relative; overflow: hidden; height: 15px; padding-top: 3px; align-items: center; border-right: 1px solid #999; font-family: "Liberation Mono", monospace; font-size: 10px; line-height: 11px; color: #f4f4f4; }
.times span { flex: 0 0 4.600%; }
.times em { position: absolute; right: 0; width: 49px; overflow: hidden; white-space: nowrap; background: #000; font-style: normal; border-top: 1px dotted #777; }

.scrollrow { flex: none; height: 9px; display: flex; align-items: stretch; background: #fff; color: #111; }
.k { width: 9px; font-size: 8px; line-height: 8px; text-align: center; background: #f4f4f4; border: 1px solid #aaa; border-width: 0 1px 1px 0; overflow: hidden; }
.k.navy { color: #10108c; }
.track { flex: 1; background: linear-gradient(#eee, #fff); display: flex; justify-content: flex-end; }
.track i { width: 67px; margin-right: 31px; background: #f2f2f2; border: 1px solid #888; border-width: 0 1px 1px 0; }
.scrollrow input { appearance: none; width: 54px; height: 8px; margin: 0 4px; background: linear-gradient(#999, #999) center / 100% 1px no-repeat; }
.scrollrow input::-webkit-slider-thumb { appearance: none; width: 3px; height: 6px; background: #eee; border: 1px solid #888; }

.sheetrow { flex: none; height: 13px; display: flex; background: #fff; color: #333; border-top: 1px solid #aaa; }
.sheetrow > button { width: 39px; height: 11px; border: 1px solid #888; border-width: 0 1px 1px 0; margin-right: 1px; text-align: left; padding-left: 1px; background: #f6f6f6; }
.sheetrow > .on { width: 83px; margin: 0; font-weight: 700; font-size: 9px; color: #000; padding-left: 2px; background: #fff; }
.acts { margin-left: auto; display: grid; grid-template-columns: repeat(4, 42px); }
.acts button { height: 11px; border: 1px solid #777; border-width: 0 1px 1px 0; background: #f6f6f6; margin-right: 1px; }

.tools { flex: none; width: 13px; background: #f1f1f1; border-left: 1px solid #ccc; display: flex; flex-direction: column; padding-top: 4px; }
.tools button { flex: none; height: 12px; border: 1px solid #ddd; border-bottom-color: #b4b4b4; display: grid; place-items: center; color: #111; background: #fafafa; }
.tools .on { background: #fff; border-color: #888; }
.tools svg { width: 11px; height: 11px; fill: none; stroke: #222; }
.tools .red { stroke: #8c2018; stroke-width: 1.500; }
.tools .corner { fill: #d01870; stroke: none; }
.tools span { font-size: 10px; line-height: 10px; }
.gap { height: 4px; flex: none; border-bottom: 1px solid #bbb; }

.ticker { flex: none; height: 16px; display: flex; background: #000; border: 1px solid #bbb; border-width: 1px 0 2px; align-items: stretch; color: #333; line-height: 13px; }
.sq { width: 7px; height: 7px; background: #fff; margin: 3px 4px 0 5px; }
.idx { width: 34px; border: 1px solid #8a7078; color: #ddd; background: #0a0a0a; font-size: 8px; }
.q { width: 22px; margin-right: 1px; background: #fff; text-align: center; font-size: 9px; }
.q.red { color: #d02040; }
.q.pink { color: #ff70b0; }
.q.sky { color: #10a8e8; }
.q.blue { color: #2020e8; }
.strip { flex: 1; min-width: 0; margin-left: 2px; background: #fff; display: grid; grid-template-columns: 25px 39px 43px 46px 35px 10px 1fr; overflow: hidden; white-space: nowrap; }
.at { color: #999; }
.chg i { display: inline-block; border: 4px solid transparent; border-bottom: 6px solid #e01818; border-top: 0; margin-right: 1px; }
.box, .ends button { background: #fff; border: 1px solid #000; font-size: 6px; line-height: 7px; color: #000; }
.ends { width: 51px; display: flex; gap: 2px; padding: 2px 0 2px 33px; }
.ends button { width: 8px; }

.taskbar { flex: none; height: 26px; background: #1c2b39; display: flex; justify-content: space-between; color: #fff; }
.apps { width: 387px; display: flex; }
.apps button { flex: 1; display: grid; place-items: center; position: relative; }
.apps svg { width: 19px; height: 19px; }
.apps .active { background: #4a5862; border-bottom: 2px solid #76b9ed; }
.mt span { position: absolute; font-size: 6px; font-weight: 700; line-height: 8px; }
.mm span { width: 15px; height: 16px; background: #fff; color: #0a8a68; font: 700 14px/16px "Liberation Sans", sans-serif; }
.tray { display: flex; align-items: center; gap: 4px; padding-right: 10px; font-family: "Noto Sans", "Noto Sans CJK JP", sans-serif; }
.tray svg { width: 12px; height: 12px; fill: none; stroke: #eee; }
.tray .kb { width: 17px; height: 12px; }
.ime { font: 400 12px/14px "Noto Sans", sans-serif; }
.tray time { width: 46px; text-align: center; font-size: 8px; line-height: 12px; }
.bell { position: relative; margin-left: 5px; }
.bell svg { width: 16px; height: 16px; }
.bell span { position: absolute; right: 2px; bottom: 1px; font-size: 7px; line-height: 7px; }
</style>
